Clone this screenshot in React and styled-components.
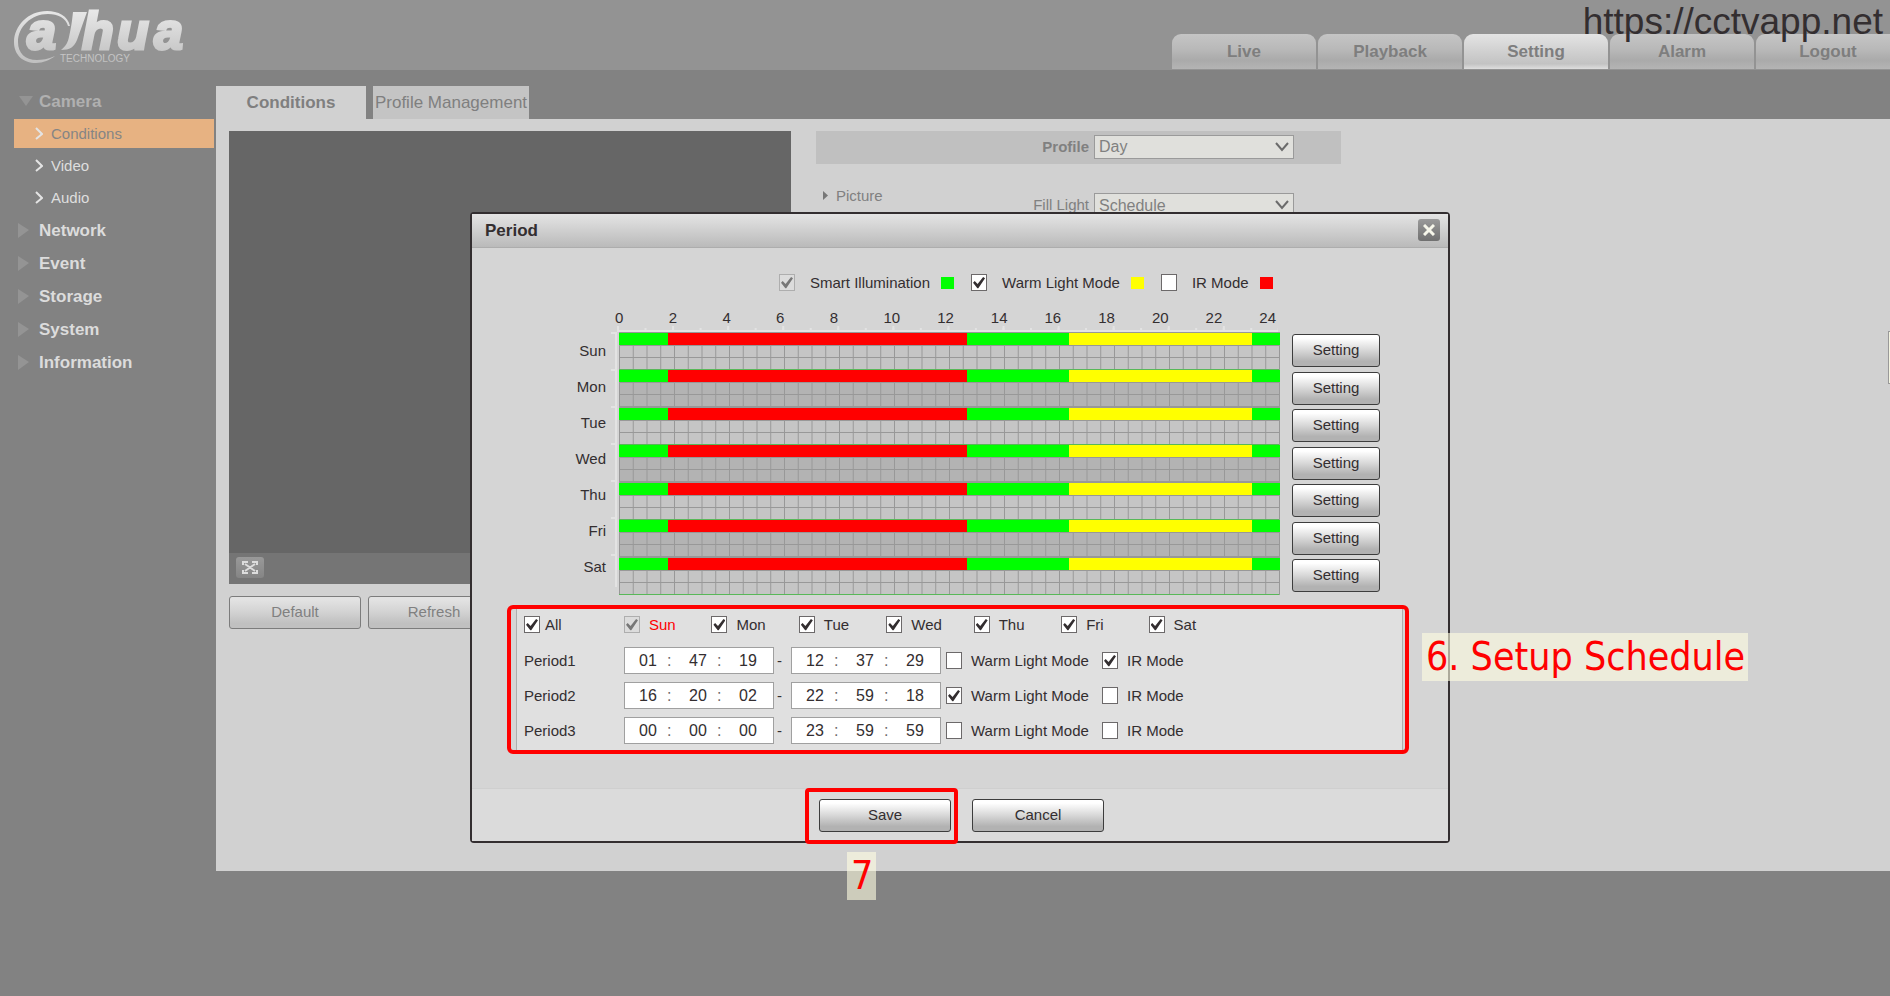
import React, { useState } from 'react';
import styled, { createGlobalStyle, css } from 'styled-components';

const GlobalStyle = createGlobalStyle`
    * {
        box-sizing: border-box;
    }

    body {
        margin: 0;
        background: #828282;
        color: #332e30;
        font-family: 'Liberation Sans', Arial, sans-serif;
        font-size: 15px;
        line-height: 17px;
    }

    button, input, select {
        font-family: inherit;
        color: inherit;
    }
`;

const Shell = styled.div`
    position: relative;
    display: flex;
    flex-direction: column;
    min-height: 100vh;
    overflow: hidden;
`;

/* header */

const Header = styled.header`
    display: flex;
    justify-content: space-between;
    height: 70px;
    padding-left: 12px;
    background: #939393;
`;

const TopNav = styled.nav`
    display: flex;
    align-items: flex-end;
    gap: 2px;
    margin-right: -10px;
    padding-bottom: 1px;
`;

const TopTab = styled.a`
    width: 144px;
    height: 35px;
    border-radius: 9px 9px 0 0;
    background: linear-gradient(#c5c5c5, #b8b8b8 45%, #aaaaaa 75%, #b4b4b4);
    color: #7e7e7e;
    font-size: 17px;
    font-weight: bold;
    line-height: 35px;
    text-align: center;
    text-decoration: none;

    ${({ $active }) => $active && css`
        background: linear-gradient(#e4e4e4, #d2d2d2 45%, #c3c3c3 85%, #dedede);
    `}
`;

const Watermark = styled.div`
    position: absolute;
    top: 0;
    right: 7px;
    font-size: 37px;
    line-height: 44px;
`;

/* side menu */

const Body = styled.div`
    display: flex;
    flex: 1;
`;

const Sidebar = styled.nav`
    flex: none;
    width: 216px;
    padding: 15px 2px 0 14px;
`;

const MenuList = styled.ul`
    margin: 0;
    padding: 0;
    list-style: none;
`;

const MenuLink = styled.a`
    display: flex;
    align-items: center;
    gap: 10px;
    height: 33px;
    padding-left: 4px;
    color: ${({ $open }) => ($open ? '#b0b0b0' : '#dcdcdc')};
    font-size: 17px;
    font-weight: bold;
    text-decoration: none;

    svg {
        width: 15px;
        height: 15px;
        margin-right: -4px;
        fill: #949494;
    }
`;

const SubLink = styled.a`
    display: flex;
    align-items: center;
    gap: 8px;
    height: 29px;
    margin: 1px 0 2px;
    padding-left: 21px;
    color: #dedede;
    text-decoration: none;

    ${({ $active }) => $active && css`
        background: #e7b282;
        color: #858585;
    `}

    svg {
        width: 8px;
        height: 13px;
        fill: none;
        stroke: #e4e4e4;
        stroke-width: 2;
    }
`;

const SubItem = styled.li`
    display: flow-root;
`;

/* conditions page */

const Main = styled.main`
    display: flex;
    flex: 1;
    flex-direction: column;
    min-width: 0;
    padding: 16px 0 125px;
`;

const PageTabs = styled.div`
    display: flex;
    gap: 7px;
`;

const PageTab = styled.button`
    width: ${({ $active }) => ($active ? '150px' : '156px')};
    height: 33px;
    padding: 0;
    border: 0;
    background: ${({ $active }) => ($active ? '#d1d1d1' : '#c4c4c4')};
    color: #7f7f7f;
    font-size: 17px;
    font-weight: ${({ $active }) => ($active ? 'bold' : 'normal')};
    white-space: nowrap;
`;

const Panel = styled.section`
    display: flex;
    flex: 1;
    align-items: flex-start;
    gap: 25px;
    padding: 12px 13px;
    background: #d1d1d1;
`;

const Preview = styled.div`
    flex: none;
    width: 562px;
`;

const Video = styled.div`
    height: 422px;
    background: #666666;
`;

const VideoBar = styled.div`
    display: flex;
    align-items: center;
    height: 31px;
    padding: 0 7px 3px;
    background: #757575;
`;

const FullscreenButton = styled.button`
    display: flex;
    align-items: center;
    justify-content: center;
    width: 28px;
    height: 21px;
    padding: 0;
    border: 0;
    border-radius: 3px;
    background: linear-gradient(#999999, #858585);

    svg {
        width: 16px;
        height: 13px;
        fill: none;
        stroke: #dddddd;
        stroke-width: 2;
    }
`;

const Actions = styled.div`
    display: flex;
    gap: 7px;
    margin-top: 12px;
`;

const Button = styled.button`
    width: ${({ $small }) => ($small ? '88px' : '132px')};
    height: 33px;
    padding: 0 0 2px;
    border: 1px solid #3d3d3d;
    border-radius: 3px;
    background: linear-gradient(#ffffff 10%, #dcdcdc 45%, #b2b2b2 85%);
    font-size: 15px;

    ${({ $dimmed }) => $dimmed && css`
        border: 1px solid #7c7c7c;
        background: linear-gradient(#e2e2e2 10%, #d4d4d4 45%, #c0c0c0 85%);
        color: #808080;
    `}
`;

const Settings = styled.div`
    width: 525px;
    color: #808080;
`;

const ProfileRow = styled.div`
    display: flex;
    align-items: center;
    justify-content: flex-end;
    gap: 5px;
    height: 33px;
    padding: 0 47px 2px 0;
    background: #c0c0c0;
    font-weight: bold;
`;

const LightRow = styled.div`
    display: flex;
    align-items: flex-end;
    justify-content: flex-end;
    gap: 5px;
    height: 33px;
    margin-top: 20px;
    padding: 0 47px 0 7px;
`;

const Group = styled.a`
    display: flex;
    align-items: center;
    align-self: flex-start;
    gap: 8px;
    height: 22px;
    margin-right: auto;
    color: inherit;
    text-decoration: none;

    svg {
        width: 5px;
        height: 9px;
        fill: #777777;
    }
`;

const FieldLabel = styled.label`
    line-height: 24px;
`;

const SelectBox = styled.span`
    display: grid;
    align-items: center;

    select, svg {
        grid-area: 1 / 1;
    }

    select {
        appearance: none;
        width: 200px;
        height: 24px;
        padding: 0 4px;
        border: 1px solid #9a9a9a;
        border-radius: 0;
        background: #e0e0dc;
        font-size: 16px;
    }

    svg {
        justify-self: end;
        width: 14px;
        height: 10px;
        margin-right: 5px;
        fill: none;
        stroke: #6b6b6b;
        stroke-width: 2;
        pointer-events: none;
    }
`;

const EdgeTip = styled.div`
    position: absolute;
    top: 331px;
    right: 0;
    width: 2px;
    height: 53px;
    border: 1px solid #999999;
    border-right: 0;
    background: #f4f4e0;
`;

/* period dialog */

const Overlay = styled.div`
    position: absolute;
    inset: 0;
    display: flex;
    align-items: flex-start;
    justify-content: center;
    padding: 212px 0 0 30px;
`;

const Dialog = styled.div`
    position: relative;
    width: 980px;
    border: 2px solid #332e30;
    border-radius: 4px;
    background: #d5d5d5;
`;

const TitleBar = styled.div`
    display: flex;
    align-items: center;
    justify-content: space-between;
    height: 34px;
    padding: 0 8px 1px 13px;
    border-bottom: 1px solid #adadad;
    background: linear-gradient(#e4e4e4, #cfcfcf 50%, #bababa);
`;

const Title = styled.h2`
    margin: 0;
    font-size: 17px;
`;

const CloseButton = styled.button`
    display: flex;
    align-items: center;
    justify-content: center;
    width: 22px;
    height: 22px;
    padding: 0;
    border: 0;
    border-radius: 3px;
    background: linear-gradient(#9a9a9a, #707070);

    svg {
        width: 12px;
        height: 12px;
        stroke: #f6f6ea;
        stroke-width: 3;
    }
`;

const DialogBody = styled.div`
    padding: 26px 39px 34px 0;
`;

const Legend = styled.div`
    display: flex;
    align-items: center;
    gap: 17px;
    padding-left: 307px;
`;

const LegendItem = styled.div`
    display: flex;
    align-items: center;
    gap: 11px;
`;

const CheckLabel = styled.label`
    display: flex;
    align-items: center;
    gap: ${({ $gap }) => $gap || '9px'};
    color: ${({ $current }) => ($current ? '#ff0000' : 'inherit')};
    white-space: nowrap;
`;

const Checkbox = styled.input.attrs({ type: 'checkbox' })`
    appearance: none;
    display: flex;
    flex: none;
    align-items: center;
    justify-content: center;
    width: 16px;
    height: 17px;
    margin: 0;
    border: 1px solid #6c696a;
    background: #ffffff;

    &:checked::before {
        content: '';
        width: 12px;
        height: 12px;
        background: #332e30;
        clip-path: polygon(0 52%, 14% 38%, 38% 62%, 84% 4%, 100% 14%, 44% 98%, 36% 98%);
    }

    &:disabled {
        border-color: #aeaeae;
        background: #dcdcdc;
    }

    &:disabled::before {
        background: #777777;
    }
`;

const Swatch = styled.span`
    width: 13px;
    height: 12px;
    background: ${({ $color }) => $color};
`;

const Schedule = styled.div`
    display: grid;
    grid-template-columns: 134px 13px 661px 88px;
    grid-template-rows: 17px 6px 263px;
    margin-top: 18px;
`;

const Hours = styled.div`
    grid-column: 3 / -1;
    display: grid;
    grid-template-columns: repeat(13, 1fr);
    width: 698px;
    margin-left: -4px;
`;

const HourRuler = styled.div`
    grid-column: 3;
    margin: 0 2px 0 -2px;
    background:
        linear-gradient(#e3e3e3, #e3e3e3) bottom / 100% 2px no-repeat,
        linear-gradient(to right, #e3e3e3 2px, transparent 2px) left top / calc(100% / 12) 100%,
        linear-gradient(to right, #e3e3e3 2px, transparent 2px) left bottom / calc(100% / 24) 4px repeat-x;
`;

const Days = styled.div`
    grid-column: 1;
    padding-top: 1px;
    line-height: 36px;
    text-align: right;
`;

const DayRuler = styled.div`
    width: 6px;
    height: 255px;
    margin-left: 5px;
    background:
        linear-gradient(#e3e3e3, #e3e3e3) right / 2px 100% no-repeat,
        linear-gradient(#e3e3e3 2px, transparent 2px) top / 100% 37px;
`;

const Chart = styled.div`
    display: flex;
    flex-direction: column;
    border-top: 1px solid #989898;
    border-right: 1px solid #989898;
`;

const DayRow = styled.div`
    display: flex;
    flex: 1;
    flex-direction: column;
    border-bottom: 1px solid ${({ $dark }) => ($dark ? '#989898' : '#58b858')};
    background: ${({ $dark }) => ($dark ? '#b3b3b3' : '#c5c5c5')};
`;

const DayBar = styled.div`
    position: relative;
    height: 12px;
    margin-right: -1px;
    background: #00ff00;
`;

const Span = styled.div`
    position: absolute;
    top: 0;
    bottom: 0;
    background: ${({ $color }) => $color};
`;

const HalfHours = styled.div`
    flex: 1;
    background:
        linear-gradient(#989898 1px, transparent 1px) top / 100% 12px,
        linear-gradient(to right, #989898 1px, transparent 1px) left / calc(100% / 48) 100%;
`;

const RowButtons = styled.div`
    display: flex;
    flex-direction: column;
    justify-content: space-between;
    margin-left: 12px;
    padding: 2px 0 3px;

    button {
        width: 88px;
    }
`;

const Highlight = styled.div`
    margin: 10px 0 0 35px;
    padding: 0 2px 0 5px;
    border: 4px solid #ff0000;
    border-radius: 6px;
`;

const Periods = styled.div`
    display: flex;
    flex-direction: column;
    gap: 8px;
    padding: 7px 7px 6px;
    border: 1px solid #adadad;
    border-width: 0 1px;
    background: #e0e0e0;
`;

const DayChecks = styled.div`
    display: grid;
    grid-template-columns: 100px 612px;
    margin-bottom: 6px;
`;

const WeekChecks = styled.div`
    display: grid;
    grid-template-columns: repeat(7, 1fr);
`;

const PeriodRow = styled.div`
    display: grid;
    grid-template-columns: 100px 150px 17px 150px 5px 156px 1fr;
    align-items: center;
    height: 27px;
`;

const Dash = styled.span`
    padding-left: 3px;
`;

const TimeBox = styled.span`
    display: flex;
    align-items: center;
    height: 27px;
    border: 1px solid #a0a0a0;
    background: #ffffff;
    font-size: 16px;

    input {
        width: 38px;
        margin: 0 0 0 4px;
        padding: 0;
        border: 0;
        background: none;
        font-size: 16px;
        text-align: center;
    }

    span {
        width: 8px;
        color: #6c696a;
    }
`;

const Footer = styled.div`
    display: flex;
    justify-content: center;
    gap: 21px;
    padding: 10px 0 9px 3px;
    border-top: 1px solid #cfcfcf;
    background: #dbdbdb;
`;

const Marked = styled.div`
    position: relative;

    &::after {
        content: '';
        position: absolute;
        inset: -11px -7px -12px -14px;
        border: 4px solid #ff0000;
        border-radius: 4px;
        pointer-events: none;
    }
`;

const Note = styled.div`
    position: absolute;
    top: ${({ $top }) => $top};
    left: ${({ $left }) => $left};
    padding: 0 3px 0 4px;
    background: rgba(255, 254, 225, 0.6);
    color: #ff0000;
    font-family: 'DejaVu Sans Condensed', 'DejaVu Sans', sans-serif;
    font-size: 39px;
    line-height: 48px;
    white-space: nowrap;
`;

const COLORS = { smart: '#00ff00', warm: '#ffff00', ir: '#ff0000' };

const DAYS = ['Sun', 'Mon', 'Tue', 'Wed', 'Thu', 'Fri', 'Sat'];

const HOURS = [0, 2, 4, 6, 8, 10, 12, 14, 16, 18, 20, 22, 24];

const MENU = ['Network', 'Event', 'Storage', 'System', 'Information'];

const PERIODS = [
    { name: 'Period1', from: ['01', '47', '19'], to: ['12', '37', '29'], mode: 'ir' },
    { name: 'Period2', from: ['16', '20', '02'], to: ['22', '59', '18'], mode: 'warm' },
    { name: 'Period3', from: ['00', '00', '00'], to: ['23', '59', '59'], mode: '' },
];

const toPercent = ([h, m, s]) => ((Number(h) * 3600 + Number(m) * 60 + Number(s)) / 86400) * 100;

const Logo = () => (
    <svg width="190" height="70" viewBox="12 0 190 70" role="img" aria-label="Dahua Technology">
        <defs>
            <linearGradient id="logo" x1="0" y1="10" x2="0" y2="62" gradientUnits="userSpaceOnUse">
                <stop offset="0" stopColor="#e8e8e8" />
                <stop offset="1" stopColor="#c0c0c0" />
            </linearGradient>
        </defs>
        <g fill="url(#logo)">
            <path d="M70 26C68 16 58 11 47 11C28 11 14 26 14 42C14 55 23 63 36 63C43 63 50 60 55 56C48 59 42 60 37 60C25 60 18 53 18 42C18 27 31 14 48 14C58 14 66 18 68 26Z" />
            <path d="M73 12H87L77 40C74 47 70 50 61 50C66 46 68 42 69 37C71 28 72 22 73 12Z" />
            <g
                fontFamily="'Liberation Sans', Arial, sans-serif"
                fontWeight="bold"
                fontStyle="italic"
                fontSize="52"
                stroke="url(#logo)"
                strokeWidth="3"
            >
                <text x="27" y="49">a</text>
                <text x="82" y="49">h</text>
                <text x="117" y="49">u</text>
                <text x="154" y="49">a</text>
            </g>
            <text x="60" y="62" fontFamily="'Liberation Sans', Arial, sans-serif" fontSize="10">TECHNOLOGY</text>
        </g>
    </svg>
);

const Select = ({ id, value }) => (
    <SelectBox>
        <select id={id} defaultValue={value}>
            <option>{value}</option>
        </select>
        <svg viewBox="0 0 14 10"><path d="M1 1L7 8L13 1" /></svg>
    </SelectBox>
);

const Time = ({ label, value }) => (
    <TimeBox>
        {value.map((part, i) => (
            <React.Fragment key={i}>
                <input aria-label={`${label} ${['hour', 'minute', 'second'][i]}`} defaultValue={part} />
                {i < 2 ? <span>:</span> : ''}
            </React.Fragment>
        ))}
    </TimeBox>
);

const SideMenu = () => (
    <Sidebar>
        <MenuList>
            <li>
                <MenuLink href="#camera" $open>
                    <svg viewBox="0 0 15 15"><path d="M1 2H15L8 12Z" /></svg>
                    Camera
                </MenuLink>
            </li>
            {['Conditions', 'Video', 'Audio'].map((name) => (
                <SubItem key={name}>
                    <SubLink href={`#${name}`} $active={name === 'Conditions'}>
                        <svg viewBox="0 0 8 13"><path d="M1 1L7 7L1 12" /></svg>
                        {name}
                    </SubLink>
                </SubItem>
            ))}
            {MENU.map((name) => (
                <li key={name}>
                    <MenuLink href={`#${name}`}>
                        <svg viewBox="0 0 15 15"><path d="M0 0L11 7L0 15Z" /></svg>
                        {name}
                    </MenuLink>
                </li>
            ))}
        </MenuList>
    </Sidebar>
);

const Conditions = () => (
    <Main>
        <PageTabs>
            <PageTab $active>Conditions</PageTab>
            <PageTab>Profile Management</PageTab>
        </PageTabs>
        <Panel>
            <Preview>
                <Video />
                <VideoBar>
                    <FullscreenButton aria-label="Fullscreen">
                        <svg viewBox="0 0 16 13">
                            <path d="M1 4V1H6M10 1H15V4M15 9V12H10M6 12H1V9M3 3L13 10M13 3L3 10" />
                        </svg>
                    </FullscreenButton>
                </VideoBar>
                <Actions>
                    <Button $dimmed>Default</Button>
                    <Button $dimmed>Refresh</Button>
                </Actions>
            </Preview>
            <Settings>
                <ProfileRow>
                    <FieldLabel htmlFor="profile">Profile</FieldLabel>
                    <Select id="profile" value="Day" />
                </ProfileRow>
                <LightRow>
                    <Group href="#picture">
                        <svg viewBox="0 0 10 18"><path d="M0 0L10 9L0 18Z" /></svg>
                        Picture
                    </Group>
                    <FieldLabel htmlFor="fill">Fill Light</FieldLabel>
                    <Select id="fill" value="Schedule" />
                </LightRow>
            </Settings>
        </Panel>
    </Main>
);

const PeriodDialog = () => {
    const [periods, setPeriods] = useState(PERIODS);

    const toggleMode = (index, mode) => {
        setPeriods(periods.map((p, i) => (i === index ? { ...p, mode: p.mode === mode ? '' : mode } : p)));
    };

    return (
        <Dialog role="dialog" aria-labelledby="period-title">
            <TitleBar>
                <Title id="period-title">Period</Title>
                <CloseButton aria-label="Close">
                    <svg viewBox="0 0 12 12"><path d="M1 1L11 11M11 1L1 11" /></svg>
                </CloseButton>
            </TitleBar>
            <DialogBody>
                <Legend>
                    <LegendItem>
                        <CheckLabel $gap="15px"><Checkbox defaultChecked disabled />Smart Illumination</CheckLabel>
                        <Swatch $color={COLORS.smart} />
                    </LegendItem>
                    <LegendItem>
                        <CheckLabel $gap="15px"><Checkbox defaultChecked />Warm Light Mode</CheckLabel>
                        <Swatch $color={COLORS.warm} />
                    </LegendItem>
                    <LegendItem>
                        <CheckLabel $gap="15px"><Checkbox />IR Mode</CheckLabel>
                        <Swatch $color={COLORS.ir} />
                    </LegendItem>
                </Legend>

                <Schedule>
                    <Hours>
                        {HOURS.map((hour) => <span key={hour}>{hour}</span>)}
                    </Hours>
                    <HourRuler />
                    <Days>
                        {DAYS.map((day) => <div key={day}>{day}</div>)}
                    </Days>
                    <DayRuler />
                    <Chart>
                        {DAYS.map((day, i) => (
                            <DayRow key={day} $dark={i % 2 === 1}>
                                <DayBar>
                                    {periods.filter((p) => p.mode).map((p) => (
                                        <Span
                                            key={p.name}
                                            $color={COLORS[p.mode]}
                                            style={{ left: `${toPercent(p.from)}%`, right: `${100 - toPercent(p.to)}%` }}
                                        />
                                    ))}
                                </DayBar>
                                <HalfHours />
                            </DayRow>
                        ))}
                    </Chart>
                    <RowButtons>
                        {DAYS.map((day) => <Button key={day} $small>Setting</Button>)}
                    </RowButtons>
                </Schedule>

                <Highlight>
                    <Periods>
                        <DayChecks>
                            <CheckLabel $gap="5px"><Checkbox defaultChecked />All</CheckLabel>
                            <WeekChecks>
                                {DAYS.map((day) => (
                                    <CheckLabel key={day} $current={day === 'Sun'}>
                                        <Checkbox defaultChecked disabled={day === 'Sun'} />
                                        {day}
                                    </CheckLabel>
                                ))}
                            </WeekChecks>
                        </DayChecks>
                        {periods.map((p, i) => (
                            <PeriodRow key={p.name}>
                                <span>{p.name}</span>
                                <Time label={`${p.name} from`} value={p.from} />
                                <Dash>-</Dash>
                                <Time label={`${p.name} to`} value={p.to} />
                                <span />
                                <CheckLabel>
                                    <Checkbox checked={p.mode === 'warm'} onChange={() => toggleMode(i, 'warm')} />
                                    Warm Light Mode
                                </CheckLabel>
                                <CheckLabel>
                                    <Checkbox checked={p.mode === 'ir'} onChange={() => toggleMode(i, 'ir')} />
                                    IR Mode
                                </CheckLabel>
                            </PeriodRow>
                        ))}
                    </Periods>
                </Highlight>
            </DialogBody>
            <Footer>
                <Marked>
                    <Button>Save</Button>
                </Marked>
                <Button>Cancel</Button>
            </Footer>
            <Note $top="419px" $left="950px">6. Setup Schedule</Note>
            <Note $top="638px" $left="375px">7</Note>
        </Dialog>
    );
};

const App = () => (
    <>
        <GlobalStyle />
        <Shell>
            <Header>
                <Logo />
                <TopNav>
                    {['Live', 'Playback', 'Setting', 'Alarm', 'Logout'].map((name) => (
                        <TopTab key={name} href={`#${name}`} $active={name === 'Setting'}>{name}</TopTab>
                    ))}
                </TopNav>
            </Header>
            <Body>
                <SideMenu />
                <Conditions />
            </Body>
            <EdgeTip />
            <Watermark>https://cctvapp.net</Watermark>
            <Overlay>
                <PeriodDialog />
            </Overlay>
        </Shell>
    </>
);

export default App;
